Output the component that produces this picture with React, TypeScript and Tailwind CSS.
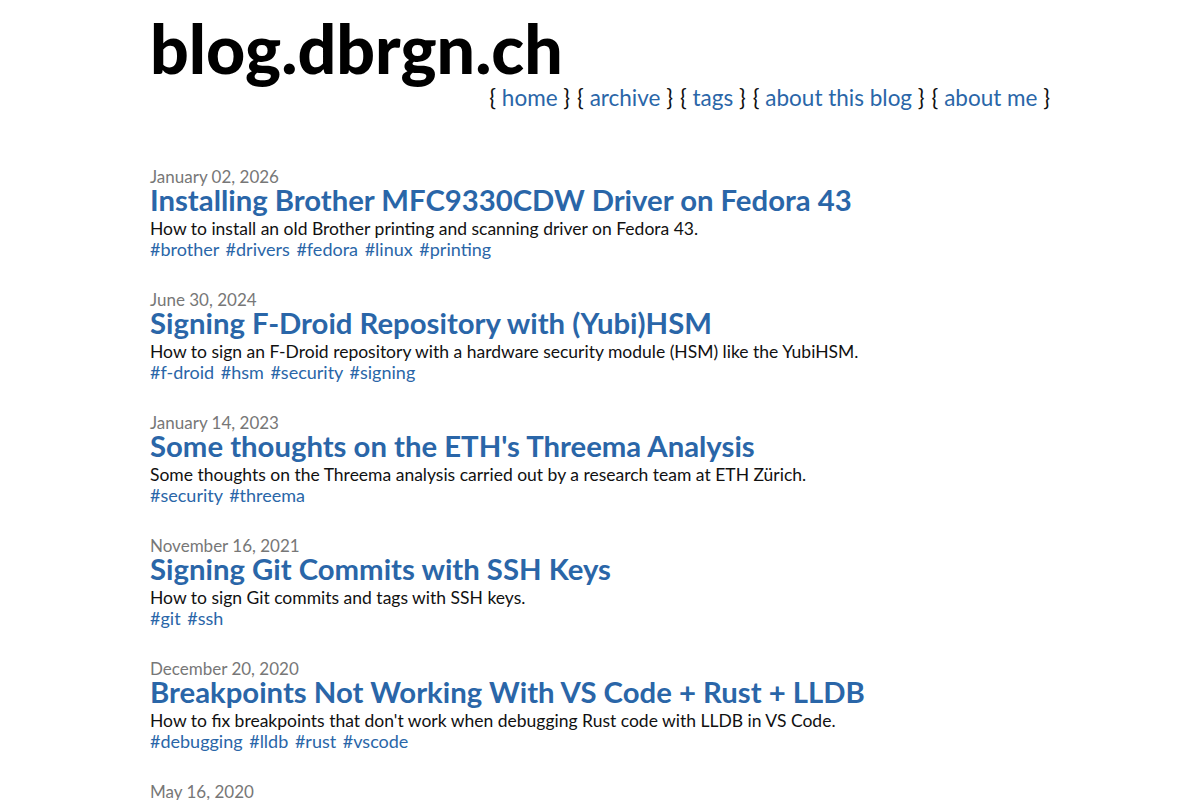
import React from "react";

type Post = {
  date: string;
  title: string;
  summary: string;
  tags: string[];
};

const posts: Post[] = [
  {
    date: "January 02, 2026",
    title: "Installing Brother MFC9330CDW Driver on Fedora 43",
    summary: "How to install an old Brother printing and scanning driver on Fedora 43.",
    tags: ["brother", "drivers", "fedora", "linux", "printing"],
  },
  {
    date: "June 30, 2024",
    title: "Signing F-Droid Repository with (Yubi)HSM",
    summary: "How to sign an F-Droid repository with a hardware security module (HSM) like the YubiHSM.",
    tags: ["f-droid", "hsm", "security", "signing"],
  },
  {
    date: "January 14, 2023",
    title: "Some thoughts on the ETH's Threema Analysis",
    summary: "Some thoughts on the Threema analysis carried out by a research team at ETH Zürich.",
    tags: ["security", "threema"],
  },
  {
    date: "November 16, 2021",
    title: "Signing Git Commits with SSH Keys",
    summary: "How to sign Git commits and tags with SSH keys.",
    tags: ["git", "ssh"],
  },
  {
    date: "December 20, 2020",
    title: "Breakpoints Not Working With VS Code + Rust + LLDB",
    summary: "How to fix breakpoints that don't work when debugging Rust code with LLDB in VS Code.",
    tags: ["debugging", "lldb", "rust", "vscode"],
  },
  {
    date: "May 16, 2020",
    title: "Fixing Docker Networking After Suspend",
    summary: "",
    tags: [],
  },
];

const navItems = ["home", "archive", "tags", "about this blog", "about me"];

export default function App() {
  return (
    <div className="min-h-screen bg-white text-black" style={{ fontFamily: "Lato, 'Noto Sans', sans-serif" }}>
      <div className="mx-auto w-[900px]">
        <header className="pt-[8px]">
          <h1 className="text-[68px] font-black leading-[80px] tracking-[0px] text-black">blog.dbrgn.ch</h1>
          <nav className="-mt-[4px] flex justify-end text-[22.5px] leading-[28px] text-[#111]">
            {navItems.map((item) => (
              <span key={item} className="ml-[7px] whitespace-pre first:ml-0">
                {"{ "}
                <a href="#" className="text-[#2a66a8]">
                  {item}
                </a>
                {" }"}
              </span>
            ))}
          </nav>
        </header>

        <main className="mt-[56px] flex flex-col gap-[32px]">
          {posts.map((post) => (
            <article key={post.title} className="flex flex-col">
              <div className="text-[17px] leading-[18px] text-[#777]">{post.date}</div>
              <h2 className="text-[29.3px] font-bold leading-[28px] text-[#2a66a8]">
                <a href="#">{post.title}</a>
              </h2>
              {post.summary && (
                <p className="mt-[5px] text-[17.5px] leading-[20px] text-[#111]">{post.summary}</p>
              )}
              {post.tags.length > 0 && (
                <div className="text-[18px] leading-[20px] text-[#2a66a8] [word-spacing:2px]">
                  {post.tags.map((t, i) => (
                    <React.Fragment key={t}>
                      {i > 0 && " "}
                      <a href="#">#{t}</a>
                    </React.Fragment>
                  ))}
                </div>
              )}
            </article>
          ))}
        </main>
      </div>
    </div>
  );
}
